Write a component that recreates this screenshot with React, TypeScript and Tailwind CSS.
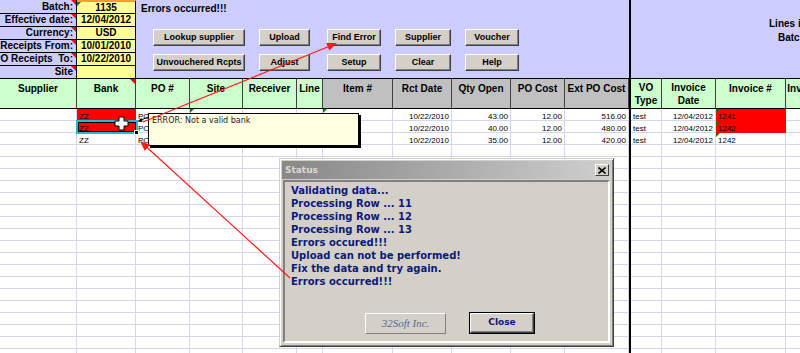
import React from "react";

const COLW = [
  "w-[77px]", "w-[59px]", "w-[54px]", "w-[53px]", "w-[54px]", "w-[26px]", "w-[70px]",
  "w-[59px]", "w-[59px]", "w-[54px]", "w-[64px]", "w-[2px]", "w-[31px]", "w-[54px]",
  "w-[70px]", "w-[60px]",
];

type Cell = { t?: string; r?: boolean; red?: boolean; tri?: boolean };

const E: Cell = {};
const dataRows: Cell[][] = [
  [E, { t: "ZZ", red: true }, { t: "PO" }, { tri: true }, E, E, { tri: true }, { t: "10/22/2010", r: true }, { t: "43.00", r: true }, { t: "12.00", r: true }, { t: "516.00", r: true }, E, { t: "test" }, { t: "12/04/2012", r: true }, { t: "1241", red: true, tri: true }, E],
  [E, { t: "ZZ", red: true }, { t: "PO" }, E, E, E, E, { t: "10/22/2010", r: true }, { t: "40.00", r: true }, { t: "12.00", r: true }, { t: "480.00", r: true }, E, { t: "test" }, { t: "12/04/2012", r: true }, { t: "1242", red: true, tri: true }, E],
  [E, { t: "ZZ" }, { t: "PO" }, E, E, E, E, { t: "10/22/2010", r: true }, { t: "35.00", r: true }, { t: "12.00", r: true }, { t: "420.00", r: true }, E, { t: "test" }, { t: "12/04/2012", r: true }, { t: "1242", tri: true }, E],
];
const emptyRows = Array.from({ length: 18 }, () => Array.from({ length: 16 }, () => E));

const labels: [string, string][] = [
  ["Batch:", "1135"],
  ["Effective date:", "12/04/2012"],
  ["Currency:", "USD"],
  ["Receipts From:", "10/01/2010"],
  ["PO Receipts  To:", "10/22/2010"],
  ["Site", ""],
];

type H = { t: string[]; grey?: boolean; center?: boolean; tri?: boolean };
const headers: H[] = [
  { t: ["Supplier"] },
  { t: ["Bank"], tri: true },
  { t: ["PO #"] },
  { t: ["Site"] },
  { t: ["Receiver"] },
  { t: ["Line"] },
  { t: ["Item #"], grey: true },
  { t: ["Rct Date"], grey: true },
  { t: ["Qty Open"], grey: true },
  { t: ["PO Cost"], grey: true },
  { t: ["Ext PO Cost"], grey: true },
  { t: [] },
  { t: ["VO", "Type"], center: true },
  { t: ["Invoice", "Date"], center: true },
  { t: ["Invoice #"] },
  { t: ["Invoice Amt"] },
];

function Btn({ label, w, ml }: { label: string; w: string; ml: string }) {
  return (
    <div
      className={`${w} ${ml} shrink-0 h-[17px] bg-[#d4d0c8] border border-t-white border-l-white border-r-[#404040] border-b-[#404040] shadow-[inset_-1px_-1px_0_#808080] flex items-center justify-center text-[9px] font-bold text-black leading-none`}
    >
      {label}
    </div>
  );
}

const RedTri = () => (
  <div className="absolute top-0 right-0 w-[5px] h-[5px] bg-[#ff0000] [clip-path:polygon(0_0,100%_0,100%_100%)]" />
);
const GreenTri = () => (
  <div className="absolute top-0 left-0 w-[4px] h-[4px] bg-[#007a00] [clip-path:polygon(0_0,100%_0,0_100%)]" />
);

function DataRow({ cells }: { cells: Cell[] }) {
  return (
    <div className="flex h-[12px] shrink-0">
      {COLW.map((w, i) => {
        if (i === 11) return <div key={i} className={`${w} shrink-0 bg-black`} />;
        const c = cells[i] || E;
        return (
          <div
            key={i}
            className={`${w} shrink-0 relative overflow-hidden border-r border-b ${c.red ? "bg-[#ff0000] border-[#ff0000]" : "border-[#d6d6ea]"} flex ${c.r ? "justify-end" : "justify-start"} px-[2px] pt-[2px] text-[8px] leading-[11px] text-black whitespace-nowrap`}
          >
            {c.tri && <GreenTri />}
            {c.t}
          </div>
        );
      })}
    </div>
  );
}

const dlgLines = [
  "Validating data...",
  "Processing Row ... 11",
  "Processing Row ... 12",
  "Processing Row ... 13",
  "Errors occured!!!",
  "Upload can not be performed!",
  "Fix the data and try again.",
  "Errors occurred!!!",
];

export default function App() {
  return (
    <div className="relative w-[800px] h-[353px] overflow-hidden bg-white font-['Liberation_Sans',Arial,sans-serif] text-black">
      {/* top section */}
      <div className="flex h-[79px]">
        <div className="w-[136px] shrink-0 flex flex-col">
          {labels.map(([l, v], i) => (
            <div key={i} className={`flex ${i === 0 ? "h-[14px]" : "h-[13px]"} shrink-0`}>
              <div className="w-[77px] shrink-0 relative overflow-hidden bg-[#ccccff] border-r border-b border-black flex justify-end items-center pr-[3px] text-[10px] font-bold leading-[12px] whitespace-pre">
                <RedTri />
                {l}
              </div>
              <div className={`w-[59px] shrink-0 relative bg-[#ffff99] border-r border-b border-black ${i === 0 ? "border-t-2 border-t-[#f0a030]" : ""} flex justify-center items-center text-[10px] font-bold leading-[12px]`}>
                {i === 0 && <GreenTri />}
                {v}
              </div>
            </div>
          ))}
        </div>
        <div className="w-[493px] shrink-0 bg-[#ccccff] border-b border-black flex flex-col pl-[5px] pt-[3px]">
          <div className="text-[10px] font-bold leading-[12px]">Errors occurred!!!</div>
          <div className="flex mt-[14px] -ml-[5px]">
            <Btn label="Lookup supplier" w="w-[92px]" ml="ml-[17px]" />
            <Btn label="Upload" w="w-[51px]" ml="ml-[14px]" />
            <Btn label="Find Error" w="w-[54px]" ml="ml-[17px]" />
            <Btn label="Supplier" w="w-[56px]" ml="ml-[14px]" />
            <Btn label="Voucher" w="w-[54px]" ml="ml-[14px]" />
          </div>
          <div className="flex mt-[8px] -ml-[5px]">
            <Btn label="Unvouchered Rcpts" w="w-[92px]" ml="ml-[17px]" />
            <Btn label="Adjust" w="w-[51px]" ml="ml-[14px]" />
            <Btn label="Setup" w="w-[54px]" ml="ml-[17px]" />
            <Btn label="Clear" w="w-[56px]" ml="ml-[14px]" />
            <Btn label="Help" w="w-[54px]" ml="ml-[14px]" />
          </div>
        </div>
        <div className="w-[2px] shrink-0 bg-black" />
        <div className="flex-1 bg-[#ccccff] border-b border-black pt-[17px] text-[10px] font-bold leading-[14px] whitespace-nowrap overflow-hidden">
          <div className="pl-[138px]">Lines in</div>
          <div className="pl-[147px]">Batch:</div>
        </div>
      </div>

      {/* header row */}
      <div className="flex h-[30px] border-b border-black">
        {headers.map((h, i) => {
          const w = COLW[i];
          if (i === 11) return <div key={i} className={`${w} shrink-0 bg-black`} />;
          return (
            <div
              key={i}
              className={`${w} shrink-0 relative overflow-hidden border-r border-[#404040] ${h.grey ? "bg-[#c0c0c0]" : "bg-[#ccffcc]"} flex flex-col ${h.center ? "justify-center" : "justify-start pt-[3px]"} items-center text-[10px] font-bold leading-[13px] whitespace-nowrap`}
            >
              {h.tri && <RedTri />}
              {h.t.map((s, k) => (
                <div key={k}>{s}</div>
              ))}
            </div>
          );
        })}
      </div>

      {/* data rows */}
      <div className="flex flex-col">
        {dataRows.map((r, i) => (
          <DataRow key={i} cells={r} />
        ))}
        {emptyRows.map((r, i) => (
          <DataRow key={"e" + i} cells={r} />
        ))}
      </div>

      {/* selection */}
      <div className="absolute left-[76px] top-[120px] w-[62px] h-[14px] border-2 border-[#20bccb] shadow-[inset_0_0_0_1px_#000]" />
      <div className="absolute left-[134px] top-[130px] w-[5px] h-[5px] bg-black border border-white" />
      <svg className="absolute left-[114px] top-[116px]" width="15" height="15" viewBox="0 0 15 15">
        <path d="M5 1h5v4h4v5h-4v4H5v-4H1V5h4z" fill="#fff" stroke="#000" strokeWidth="1" />
      </svg>

      {/* comment */}
      <div className="absolute left-[148px] top-[113px] w-[211px] h-[33px] bg-[#ffffe1] border border-black shadow-[2px_2px_0_#000] pl-[3px] pt-[1px] font-['DejaVu_Sans',sans-serif] text-[8px] leading-[11px] text-[#222]">
        ERROR: Not a valid bank
      </div>

      {/* status dialog */}
      <div className="absolute left-[279px] top-[158px] w-[335px] h-[189px] bg-[#d4d0c8] border border-t-[#d4d0c8] border-l-[#d4d0c8] border-r-[#404040] border-b-[#404040] shadow-[inset_1px_1px_0_#fff,inset_-1px_-1px_0_#808080] p-[2px] flex flex-col font-['DejaVu_Sans',sans-serif]">
        <div className="h-[18px] shrink-0 bg-gradient-to-r from-[#888888] to-[#cfcfcf] flex items-center justify-between pl-[3px] pr-[2px]">
          <span className="text-[9px] font-bold text-[#dcd9d2] leading-none">Status</span>
          <div className="w-[14px] h-[12px] bg-[#d4d0c8] border border-t-white border-l-white border-r-[#404040] border-b-[#404040] flex items-center justify-center">
            <svg width="8" height="7" viewBox="0 0 8 7">
              <path d="M0.5 0.5L7.5 6.5M7.5 0.5L0.5 6.5" stroke="#000" strokeWidth="1.6" />
            </svg>
          </div>
        </div>
        <div className="flex-1 mt-[1px] mx-[1px] mb-[1px] border-2 border-t-[#808080] border-l-[#808080] border-r-white border-b-white flex flex-col pl-[6px] pt-[2px] pb-[7px]">
          {dlgLines.map((s, i) => (
            <div key={i} className="text-[10px] font-bold leading-[13px] text-[#0a1a78] whitespace-nowrap">
              {s}
            </div>
          ))}
          <div className="mt-auto flex items-center">
            <div className="ml-[74px] w-[81px] h-[21px] bg-[#d4d0c8] border border-t-white border-l-white border-r-[#808080] border-b-[#808080] flex items-center justify-center font-['Liberation_Serif',serif] italic text-[11px] text-[#5b6697]">
              32Soft Inc.
            </div>
            <div className="ml-[23px] w-[66px] h-[22px] border border-black">
              <div className="w-full h-full bg-[#d4d0c8] border border-t-white border-l-white border-r-[#404040] border-b-[#404040] shadow-[inset_-1px_-1px_0_#808080] flex items-center justify-center text-[9px] font-bold text-[#0a1a78]">
                Close
              </div>
            </div>
          </div>
        </div>
      </div>

      {/* arrows */}
      <svg className="absolute left-0 top-0 pointer-events-none" width="800" height="353">
        <line x1="143" y1="122" x2="330" y2="46" stroke="#ff1a1a" strokeWidth="1.2" />
        <polygon points="337,43 329.3,50.5 326.2,43.1" fill="#ff1a1a" />
        <line x1="290" y1="278" x2="146" y2="146.5" stroke="#ff1a1a" strokeWidth="1.2" />
        <polygon points="140,141 150.1,144.8 144.7,150.7" fill="#ff1a1a" />
        <line x1="148" y1="117" x2="140" y2="120.5" stroke="#000" strokeWidth="1" />
        <polygon points="137.5,121.5 141.5,118 142.5,122" fill="#000" />
      </svg>
    </div>
  );
}
